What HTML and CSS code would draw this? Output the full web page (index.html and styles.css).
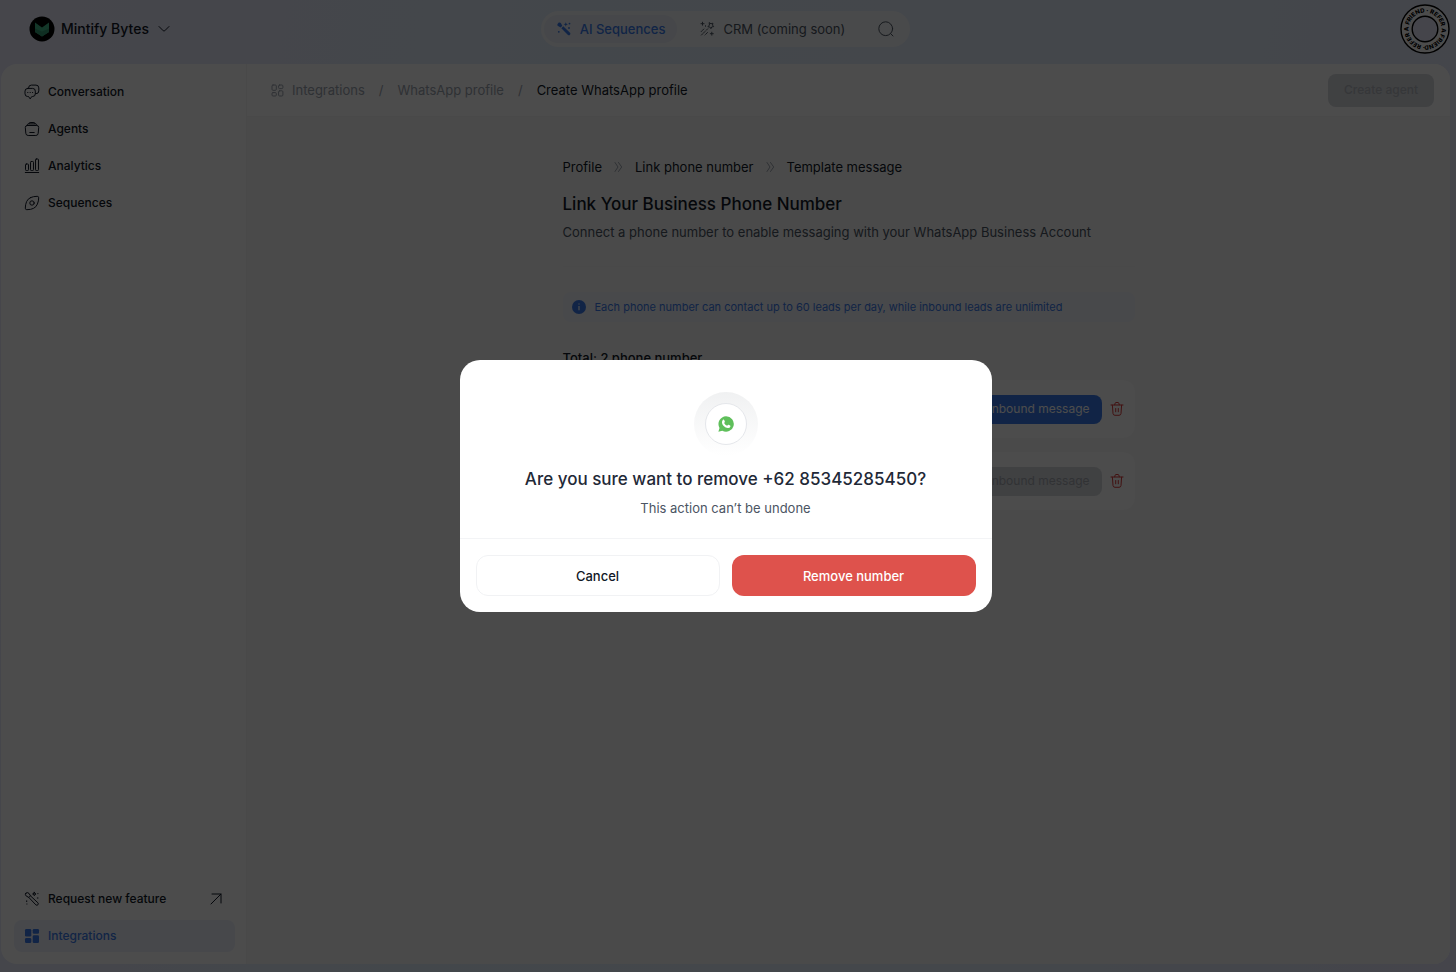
FILE: index.html
```html
<!DOCTYPE html>
<html lang="en">
<head>
  <meta charset="UTF-8">
  <title>Create WhatsApp profile</title>
  <link rel="stylesheet" href="styles.css">
</head>
<body>

<div class="app">

  <header class="topbar">
    <button class="workspace" type="button">
      <svg width="26" height="26" viewBox="0 0 26 26">
        <circle cx="13" cy="13" r="12.500" fill="#000"/>
        <path d="M6 6.500l7 5 7-5v9.500l-7 4.500-7-4.500z" fill="#45b98a"/>
        <path d="M6 12.500l7 3 7-3V16l-7 4.500L6 16z" fill="#359c73"/>
      </svg>
      Mintify Bytes
      <svg class="line" width="12" height="8" viewBox="0 0 12 8"><path d="M1 1.500l4.300 4.300q.7.600 1.400 0L11 1.500"/></svg>
    </button>

    <nav class="tabs">
      <a class="tab active" href="#">
        <svg width="16" height="16" viewBox="0 0 16 16" fill="currentColor">
          <path d="M2.800 1.600q1.600-.4 2.300.9l1.200 2.300-1.600 1.700-2.300-1.200Q.9 4.600 1.400 3.200z"/>
          <path d="M5.300 7.200l1.900-1.900 6.800 6.500q.9 1 0 2t-2 .1z"/>
          <path d="M9.800 1.200l.6 1.500 1.500.6-1.500.6-.6 1.500-.6-1.500-1.500-.6 1.500-.6z"/>
          <circle cx="13.500" cy="2.600" r=".9"/><circle cx="13" cy="7" r=".9"/><circle cx="2.800" cy="10.800" r=".9"/>
        </svg>
        AI Sequences
      </a>
      <a class="tab" href="#">
        <svg class="line" width="16" height="16" viewBox="0 0 16 16">
          <path d="M10.500 1.800l1.500 1 1.900-.6-.4 1.900 1.200 1.500-1.900.3-.9 1.800-1-1.700-2-.2 1.300-1.500z"/>
          <path d="M8.700 7.800l-1.500 1.500M6 10.500l-3.600 3.600M4.800 8l-2.600 2.600M8.500 11.500L6 14" stroke-dasharray="2.200 1"/>
          <path d="M3.500 1.200v3M2 2.700h3M12.800 11.200v3M11.300 12.700h3M6.500 4.700v.6"/>
        </svg>
        CRM (coming soon)
      </a>
      <button class="search" type="button" aria-label="Search">
        <svg class="line" width="18" height="18" viewBox="0 0 18 18"><circle cx="8.700" cy="8.700" r="6.900"/><path d="M13.600 13.600l2.400 2.400"/></svg>
      </button>
    </nav>

    <a class="refer" href="#" aria-label="Refer a friend">
      <svg width="50" height="50" viewBox="0 0 50 50">
        <defs><path id="ring" d="M25 41.500a16.500 16.500 0 1 1 .01 0"/></defs>
        <circle cx="25" cy="25" r="24" fill="#fff" stroke="#000" stroke-width="1.400"/>
        <circle cx="25" cy="25" r="12.800" fill="#e6e8fb" stroke="#000" stroke-width="1.400"/>
        <text class="ring-text"><textPath href="#ring">· REFER A FRIEND · REFER A FRIEND</textPath></text>
      </svg>
    </a>
  </header>

  <div class="panel">

    <aside class="sidebar">
      <nav class="menu">
        <a href="#">
          <svg class="line" width="16" height="16" viewBox="0 0 16 16">
            <path d="M3.700 4.400h4.900a2.700 2.700 0 0 1 2.700 2.700v2.700a2.700 2.700 0 0 1-2.700 2.700h-.8L6.200 14.900l-1.700-2.400h-.8A2.700 2.700 0 0 1 1 9.800V7.100a2.700 2.700 0 0 1 2.700-2.700z"/>
            <path d="M4.600 4.200V3.900A2.800 2.800 0 0 1 7.400 1.100H12a2.800 2.800 0 0 1 2.800 2.800v3a2.800 2.800 0 0 1-2.800 2.800h-.5"/>
            <path d="M3.700 8.500h.2M6.100 8.500h.2M8.500 8.500h.2"/>
          </svg>
          Conversation
        </a>
        <a href="#">
          <svg class="line" width="16" height="16" viewBox="0 0 16 16">
            <path d="M3.200 4.500h9.600q2 0 1.900 2l-.5 5.800q-.2 2.200-2.400 2.200H4.200Q2 14.500 1.800 12.300l-.5-5.800q-.1-2 1.900-2z"/>
            <path d="M3 4.200q.3-1.300 1.400-1.300h7.200q1.100 0 1.400 1.300M4.800 2.700q.2-1.200 1.300-1.200h3.800q1.100 0 1.300 1.200M5.800 11.500h4.400"/>
          </svg>
          Agents
        </a>
        <a href="#">
          <svg class="line" width="16" height="16" viewBox="0 0 16 16">
            <rect x="1.500" y="6" width="3" height="6.500" rx=".8"/><rect x="6.500" y="3.500" width="3" height="9" rx=".8"/><rect x="11.500" y="1" width="3" height="11.500" rx=".8"/>
            <path d="M1.300 14.500h13.400"/>
          </svg>
          Analytics
        </a>
        <a href="#">
          <svg class="line" width="16" height="16" viewBox="0 0 16 16">
            <path d="M6.500 2.600Q9.500 1.300 13.200 1.300q1.500 0 1.500 1.500 0 3-1.300 6.300-1.200 3-3.800 4.200-2.600 1.400-6.800 1.400-1.500 0-1.500-1.500 0-3.600 1.300-6.600 1.200-2.800 3.900-4z"/>
            <circle cx="8" cy="8" r="2.200"/>
          </svg>
          Sequences
        </a>
      </nav>
      <nav class="menu">
        <a href="#">
          <svg class="line" width="16" height="16" viewBox="0 0 16 16">
            <path d="M1.800 2.200q1.500-1.500 3.200.2l1.400 2.400 7.500 7q.9 1 0 2t-2 .1L4.700 6.300 2.400 5.200Q.5 3.800 1.800 2.200zM4.900 6.400l1.600-1.600"/>
            <path d="M10.300 1.300l.5 1.200 1.200.5-1.200.5-.5 1.200-.5-1.200L8.600 3l1.200-.5zM13.800 2.600h.2M13.300 7h.7M2.700 9.800v.8M2.800 13h.2"/>
          </svg>
          <span class="grow">Request new feature</span>
          <svg class="line" width="12" height="12" viewBox="0 0 12 12"><path d="M1 11L11 1M2 1h9v9"/></svg>
        </a>
        <a class="active" href="#">
          <svg width="16" height="16" viewBox="0 0 16 16" fill="currentColor">
            <rect x="1" y="1" width="6.300" height="7.600" rx="1.300"/><rect x="8.700" y="1" width="6.300" height="4.800" rx="1.300"/>
            <rect x="1" y="10" width="6.300" height="5" rx="1.300"/><rect x="8.700" y="7.200" width="6.300" height="7.800" rx="1.300"/>
          </svg>
          Integrations
        </a>
      </nav>
    </aside>

    <main class="main">
      <div class="toolbar">
        <nav class="crumbs" aria-label="Breadcrumb">
          <svg class="line" width="13" height="13" viewBox="0 0 13 13">
            <rect x="1" y="1" width="4.300" height="5.300" rx="1"/><rect x="7.600" y="1" width="4.300" height="3.600" rx="1"/>
            <rect x="1" y="8.600" width="4.300" height="3.400" rx="1"/><rect x="7.600" y="6.800" width="4.300" height="5.200" rx="1"/>
          </svg>
          <a href="#">Integrations</a>
          <span class="slash">/</span>
          <a href="#">WhatsApp profile</a>
          <span class="slash">/</span>
          <a class="current" href="#">Create WhatsApp profile</a>
        </nav>
        <button class="create" type="button" disabled>Create agent</button>
      </div>

      <div class="content">
        <ol class="steps">
          <li>Profile</li>
          <li><svg class="line" width="9" height="12" viewBox="0 0 9 12"><path d="M1 1.500L4 6l-3 4.500M4.500 1.500L7.700 6l-3.200 4.500"/></svg>Link phone number</li>
          <li><svg class="line" width="9" height="12" viewBox="0 0 9 12"><path d="M1 1.500L4 6l-3 4.500M4.500 1.500L7.700 6l-3.200 4.500"/></svg>Template message</li>
        </ol>

        <h1>Link Your Business Phone Number</h1>
        <p class="lead">Connect a phone number to enable messaging with your WhatsApp Business Account</p>

        <p class="info">
          <svg width="14" height="14" viewBox="0 0 14 14"><circle cx="7" cy="7" r="7" fill="#3b7bea"/><path d="M7 6v4.300M7 3.600v.8" stroke="#fff" stroke-width="1.200"/></svg>
          Each phone number can contact up to 60 leads per day, while inbound leads are unlimited
        </p>

        <p class="total">Total: 2 phone number</p>

        <div class="number">
          <button class="inbound" type="button">Send inbound message</button>
          <button class="trash" type="button" aria-label="Remove number">
            <svg class="line" width="14" height="16" viewBox="0 0 14 16"><path d="M1 4h12M4.700 3.800l.5-1.700q.2-.6.800-.6h2q.6 0 .8.600l.5 1.700M2.400 4.200l.6 8.300q.2 1.800 2 1.800h4q1.800 0 2-1.800l.6-8.300M5.700 7.500v3.300M8.300 7.500v3.300"/></svg>
          </button>
        </div>
        <div class="number">
          <button class="inbound" type="button" disabled>Send inbound message</button>
          <button class="trash" type="button" aria-label="Remove number">
            <svg class="line" width="14" height="16" viewBox="0 0 14 16"><path d="M1 4h12M4.700 3.800l.5-1.700q.2-.6.800-.6h2q.6 0 .8.600l.5 1.700M2.400 4.200l.6 8.300q.2 1.800 2 1.800h4q1.800 0 2-1.800l.6-8.300M5.700 7.500v3.300M8.300 7.500v3.300"/></svg>
          </button>
        </div>
      </div>
    </main>

  </div>
</div>

<div class="overlay">
  <section class="modal" role="dialog" aria-modal="true" aria-labelledby="modal-title">
    <div class="modal-body">
      <div class="halo">
        <div class="halo-inner">
          <svg width="16" height="16" viewBox="0 0 16 16">
            <path d="M8 .3a7.700 7.700 0 1 1-3.700 14.400L.4 15.700l1.100-3.800A7.700 7.700 0 0 1 8 .3z" fill="#5fbf5b"/>
            <path d="M4.900 3.800q.9-.7 1.300.2l.6 1.400q.2.400-.1.800l-.6.800q1 2 3 2.800l.8-.9q.3-.3.700-.1l1.500.8q.5.300.3.900-.6 1.800-2.600 1.600Q5.100 11.200 4 7q-.2-2 .9-3.200z" fill="#fff"/>
          </svg>
        </div>
      </div>
      <h2 id="modal-title">Are you sure want to remove +62 85345285450?</h2>
      <p>This action can’t be undone</p>
    </div>
    <div class="modal-actions">
      <button class="cancel" type="button">Cancel</button>
      <button class="remove" type="button">Remove number</button>
    </div>
  </section>
</div>

</body>
</html>
```
FILE: styles.css
```css
* { box-sizing: border-box; }

body {
  margin: 0;
  font: 13px/20px Inter, "Liberation Sans", sans-serif;
  color: #111827;
  background: linear-gradient(100deg, #eaeafb 0%, #e2eefa 35%, #e4eefa 75%, #e6e6fb 100%);
}
h1, h2, p, ol { margin: 0; padding: 0; font-weight: 500; }
a { color: inherit; text-decoration: none; }
button { font: inherit; color: inherit; border: 0; background: none; padding: 0; cursor: pointer; }
svg { display: block; flex: none; }

.line { fill: none; stroke: currentColor; stroke-linecap: round; stroke-linejoin: round; }

.app {
  display: flex;
  flex-direction: column;
  min-height: 100vh;
  padding: 0 6px 8px 1px;
}

/* top bar */
.topbar {
  display: grid;
  grid-template-columns: 1fr auto 1fr;
  align-items: center;
  height: 64px;
  padding-bottom: 6px;
}
.workspace {
  display: flex;
  align-items: center;
  gap: 6px;
  justify-self: start;
  margin-left: 28px;
  font-size: 14px;
  font-weight: 500;
}
.workspace .line { margin-left: 3px; }

.tabs {
  display: flex;
  align-items: center;
  height: 36px;
  padding: 3px;
  border-radius: 18px;
  background: #f6f8fa;
}
.tab {
  display: flex;
  align-items: center;
  gap: 8px;
  height: 28px;
  padding: 0 12px;
  border-radius: 14px;
  color: #4b5563;
}
.tab + .tab { margin-left: 10px; }
.tab.active { background: #e9eef8; color: #3b7bea; font-weight: 500; }
.search { padding: 0 12px 0 20px; color: #4b5563; }

.refer { justify-self: end; }
.ring-text { font: 800 6px Inter, sans-serif; }

/* white panel */
.panel {
  display: flex;
  flex: 1;
  border-radius: 16px;
  overflow: hidden;
  background: #fff;
}
.sidebar {
  display: flex;
  flex-direction: column;
  justify-content: space-between;
  flex: none;
  width: 246px;
  padding: 12px 11px 12px 13px;
  border-right: 1px solid #f3f4f6;
}
.menu { display: flex; flex-direction: column; gap: 5px; }
.menu a {
  display: flex;
  align-items: center;
  gap: 8px;
  height: 32px;
  padding: 0 13px 0 10px;
  border-radius: 8px;
  font-size: 12px;
  font-weight: 500;
}
.menu a.active { background: #eef1fc; color: #3b7bea; }
.grow { flex: 1; }

.main { flex: 1; background: #f8f8f8; }
.toolbar {
  display: flex;
  align-items: center;
  justify-content: space-between;
  height: 53px;
  padding: 0 16px 0 24px;
  background: #fff;
  border-bottom: 1px solid #f3f4f6;
}
.crumbs { display: flex; align-items: center; gap: 8px; color: #9ca3af; }
.crumbs .current { color: #111827; }
.slash { padding: 0 6px; }
.create {
  height: 33px;
  padding: 0 16px;
  border-radius: 8px;
  background: #d6d9de;
  color: #b4b8bf;
  font-size: 12px;
  font-weight: 500;
}

/* number form */
.content { max-width: 572px; margin: 0 auto; padding-top: 40px; }
.steps { display: flex; gap: 12px; list-style: none; font-weight: 400; }
.steps li { display: flex; align-items: center; gap: 12px; }
.steps svg { color: #9ca3af; }
h1 { margin-top: 15px; font-size: 17px; line-height: 24px; }
.lead {
  padding: 6px 0 24px;
  border-bottom: 1px solid #f3f3f4;
  font-size: 13px;
  font-weight: 400;
  color: #4b5563;
}
.info {
  display: flex;
  align-items: center;
  gap: 9px;
  height: 30px;
  margin-top: 25px;
  padding: 0 9px;
  border-radius: 8px;
  background: #f0f3fb;
  color: #3b7bea;
  font-size: 11px;
  font-weight: 400;
}
.total { margin: 26px 0 12px; }
.number {
  display: flex;
  align-items: center;
  justify-content: flex-end;
  gap: 8px;
  height: 58px;
  margin-bottom: 14px;
  padding: 0 11px;
  border-radius: 12px;
  background: #fdfdfd;
}
.inbound {
  height: 29px;
  padding: 0 12px;
  border-radius: 8px;
  background: #3b7bea;
  color: #fff;
  font-size: 12px;
}
.inbound:disabled { background: #d6d9de; color: #a5a9b0; }
.trash { color: #dc3b3b; }

/* remove dialog */
.overlay {
  position: fixed;
  inset: 0;
  display: flex;
  align-items: center;
  justify-content: center;
  padding-right: 5px;
  background: rgba(0,0,0,0.7);
}
.modal {
  width: 532px;
  border-radius: 20px;
  background: #fff;
  overflow: hidden;
}
.modal-body {
  display: flex;
  flex-direction: column;
  align-items: center;
  padding: 32px 16px 20px;
  border-bottom: 1px solid #f3f4f6;
}
.halo {
  display: flex;
  align-items: center;
  justify-content: center;
  width: 64px;
  height: 64px;
  border-radius: 50%;
  background: linear-gradient(#f0f1f2, #fff);
}
.halo-inner {
  display: flex;
  align-items: center;
  justify-content: center;
  width: 42px;
  height: 42px;
  border: 1px solid #e5e7eb;
  border-radius: 50%;
  background: #fff;
}
.modal h2 { margin-top: 11px; font-size: 17px; line-height: 24px; color: #1f2937; }
.modal p { margin-top: 7px; font-size: 13px; font-weight: 400; color: #4b5563; }
.modal-actions {
  display: grid;
  grid-template-columns: 1fr 1fr;
  gap: 12px;
  padding: 16px;
}
.modal-actions button { height: 41px; border-radius: 12px; font-size: 13px; font-weight: 500; }
.modal-actions .cancel { border: 1px solid #f1f2f4; }
.modal-actions .remove { background: #de524c; color: #fff; }
```
